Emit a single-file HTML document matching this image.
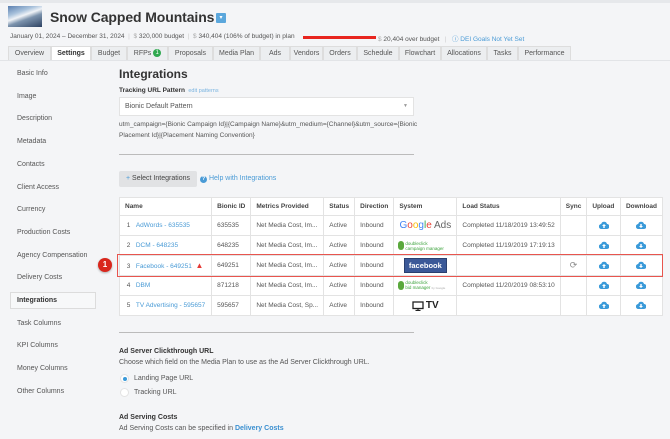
<!DOCTYPE html>
<html><head><meta charset="utf-8"><style>
*{margin:0;padding:0;box-sizing:border-box}
body{width:670px;height:439px;overflow:hidden;background:#f4f5f7;font-family:"Liberation Sans",sans-serif;color:#444;position:relative}
.a{position:absolute;white-space:nowrap}
.s{font-size:7px;color:#555}
.tab{position:absolute;top:46px;height:14px;font-size:7px;color:#555;text-align:center;line-height:14px;border:1px solid #ddd;border-bottom:none;background:#eceef0}
.side{position:absolute;left:17px;font-size:7px;color:#555}
table{border-collapse:collapse;background:#fff;font-size:6.5px;color:#555}
td,th{border:1px solid #e3e3e3;height:20px;padding:0 5px;text-align:left;white-space:nowrap}
th{height:18px;font-weight:bold;color:#444}
.lk{color:#4a9bd6}
.cl{text-align:center}
</style></head><body>
<div class="a" style="left:0;top:0;width:670px;height:3px;background:#e6e8eb"></div>
<div class="a" style="left:8px;top:6px;width:34px;height:21px;background:linear-gradient(160deg,#5a7fb0 0%,#a9c2dc 30%,#f0f3f7 45%,#7c93ad 60%,#2d4262 100%)"></div>
<div class="a" style="left:50px;top:9px;font-size:14px;font-weight:bold;color:#333;letter-spacing:-0.1px">Snow Capped Mountains</div>
<div class="a" style="left:216px;top:13px;width:10px;height:10px;background:#5ba7dc;border-radius:1px;color:#fff;font-size:6px;text-align:center;line-height:10px">▾</div>
<div class="a s" style="left:10px;top:33px;font-size:6.5px">January 01, 2024 – December 31, 2024 <span style="color:#ccc">&nbsp;|&nbsp;</span> <span style="color:#aaa">$</span> 320,000 budget <span style="color:#ccc">&nbsp;|&nbsp;</span> <span style="color:#aaa">$</span> 340,404 (106% of budget) in plan</div>
<div class="a" style="left:303px;top:36px;width:73px;height:3px;background:#e8251f"></div>
<div class="a s" style="left:378px;top:33px;font-size:6.5px"><span style="color:#aaa">$</span> 20,404 over budget <span style="color:#ccc">&nbsp;&nbsp;|&nbsp;&nbsp;</span> <span style="color:#4a9bd6">ⓘ DEI Goals Not Yet Set</span></div>
<div class="tab" style="left:8px;width:43px">Overview</div>
<div class="tab" style="left:51px;width:40px;background:#fff;font-weight:bold;color:#333;height:15px">Settings</div>
<div class="tab" style="left:91px;width:36px">Budget</div>
<div class="tab" style="left:127px;width:41px">RFPs <span style="display:inline-block;width:8px;height:8px;border-radius:4px;background:#2fa84f;color:#fff;font-size:6px;line-height:8px;vertical-align:middle">1</span></div>
<div class="tab" style="left:168px;width:45px">Proposals</div>
<div class="tab" style="left:213px;width:47px">Media Plan</div>
<div class="tab" style="left:260px;width:30px">Ads</div>
<div class="tab" style="left:290px;width:33px">Vendors</div>
<div class="tab" style="left:323px;width:34px">Orders</div>
<div class="tab" style="left:357px;width:42px">Schedule</div>
<div class="tab" style="left:399px;width:42px">Flowchart</div>
<div class="tab" style="left:441px;width:46px">Allocations</div>
<div class="tab" style="left:487px;width:31px">Tasks</div>
<div class="tab" style="left:518px;width:53px">Performance</div>
<div class="a" style="left:0;top:60px;width:670px;height:1px;background:#e2e4e7"></div>

<div class="side" style="top:70px">Basic Info</div>
<div class="side" style="top:93px">Image</div>
<div class="side" style="top:115px">Description</div>
<div class="side" style="top:138px">Metadata</div>
<div class="side" style="top:161px">Contacts</div>
<div class="side" style="top:184px">Client Access</div>
<div class="side" style="top:206px">Currency</div>
<div class="side" style="top:229px">Production Costs</div>
<div class="side" style="top:252px">Agency Compensation</div>
<div class="side" style="top:274px">Delivery Costs</div>
<div class="a" style="left:10px;top:292px;width:86px;height:17px;border:1px solid #dcdcdc;background:#f7f8f9"></div>
<div class="side" style="top:297px;font-weight:bold;color:#333">Integrations</div>
<div class="side" style="top:320px">Task Columns</div>
<div class="side" style="top:342px">KPI Columns</div>
<div class="side" style="top:365px">Money Columns</div>
<div class="side" style="top:388px">Other Columns</div>

<div class="a" style="left:119px;top:67px;font-size:12px;font-weight:bold;color:#333">Integrations</div>
<div class="a" style="left:119px;top:87px;font-size:6.5px;font-weight:bold;color:#333">Tracking URL Pattern <span style="font-weight:normal;color:#7ab4e0;font-size:5.5px">&nbsp;edit patterns</span></div>
<div class="a" style="left:119px;top:97px;width:295px;height:19px;background:#fff;border:1px solid #e3e3e3"></div>
<div class="a s" style="left:125px;top:103px">Bionic Default Pattern</div>
<div class="a" style="left:403px;top:103px;font-size:5px;color:#999">▼</div>
<div class="a s" style="left:119px;top:121px;font-size:6.5px">utm_campaign={Bionic Campaign Id}|{Campaign Name}&amp;utm_medium={Channel}&amp;utm_source={Bionic</div>
<div class="a s" style="left:119px;top:132px;font-size:6.5px">Placement Id}|{Placement Naming Convention}</div>
<div class="a" style="left:119px;top:154px;width:295px;height:1px;background:#bbb"></div>
<div class="a" style="left:119px;top:171px;width:78px;height:16px;background:#e1e2e4;border-radius:2px;font-size:7px;color:#444;line-height:16px;text-align:center"><span style="color:#4a9bd6">+</span> Select Integrations</div>
<div class="a" style="left:200px;top:175px;font-size:7px;color:#4a9bd6"><span style="display:inline-block;width:7px;height:7px;border-radius:4px;background:#4a9bd6;color:#fff;font-size:5.5px;text-align:center;line-height:7px;font-weight:bold">?</span> Help with Integrations</div>

<table class="a" style="left:119px;top:197px;width:544px">
<tr><th style="width:98px">Name</th><th style="width:39px">Bionic ID</th><th style="width:74px">Metrics Provided</th><th style="width:31px">Status</th><th style="width:38px">Direction</th><th style="width:65px">System</th><th style="width:98px">Load Status</th><th style="width:25px">Sync</th><th style="width:37px">Upload</th><th>Download</th></tr>
<tr><td>&nbsp;1 &nbsp;&nbsp;<span class="lk">AdWords - 635535</span></td><td>635535</td><td>Net Media Cost, Im...</td><td>Active</td><td>Inbound</td><td class="cl" style="font-size:10px"><span style="color:#4285f4">G</span><span style="color:#ea4335">o</span><span style="color:#fbbc05">o</span><span style="color:#4285f4">g</span><span style="color:#34a853">l</span><span style="color:#ea4335">e</span> <span style="color:#666">Ads</span></td><td>Completed 11/18/2019 13:49:52</td><td></td><td class="cl"><svg width="10" height="8" viewBox="0 0 10 8"><path d="M2.5 8a2.5 2.5 0 0 1-.3-5A3 3 0 0 1 8 3a2.5 2.5 0 0 1 0 5z" fill="#3a9ad9"/><path d="M5 3l-2 2h1.3v2h1.4V5H7z" fill="#fff"/></svg></td><td class="cl"><svg width="10" height="8" viewBox="0 0 10 8"><path d="M2.5 8a2.5 2.5 0 0 1-.3-5A3 3 0 0 1 8 3a2.5 2.5 0 0 1 0 5z" fill="#3a9ad9"/><path d="M5 7l-2-2h1.3V3h1.4v2H7z" fill="#fff"/></svg></td></tr>
<tr><td>&nbsp;2 &nbsp;&nbsp;<span class="lk">DCM - 648235</span></td><td>648235</td><td>Net Media Cost, Im...</td><td>Active</td><td>Inbound</td><td style="font-size:4.5px;color:#3ca23c;line-height:5px;padding-left:4px"><span style="display:inline-block;width:6px;height:9px;background:#5aa83c;border-radius:3px;vertical-align:middle;margin-right:1px"></span><span style="display:inline-block;vertical-align:middle">doubleclick<br>campaign manager</span></td><td>Completed 11/19/2019 17:19:13</td><td></td><td class="cl"><svg width="10" height="8" viewBox="0 0 10 8"><path d="M2.5 8a2.5 2.5 0 0 1-.3-5A3 3 0 0 1 8 3a2.5 2.5 0 0 1 0 5z" fill="#3a9ad9"/><path d="M5 3l-2 2h1.3v2h1.4V5H7z" fill="#fff"/></svg></td><td class="cl"><svg width="10" height="8" viewBox="0 0 10 8"><path d="M2.5 8a2.5 2.5 0 0 1-.3-5A3 3 0 0 1 8 3a2.5 2.5 0 0 1 0 5z" fill="#3a9ad9"/><path d="M5 7l-2-2h1.3V3h1.4v2H7z" fill="#fff"/></svg></td></tr>
<tr><td>&nbsp;3 &nbsp;&nbsp;<span class="lk">Facebook - 649251</span> &nbsp;<span style="color:#e53935;font-size:8px">▲</span></td><td>649251</td><td>Net Media Cost, Im...</td><td>Active</td><td>Inbound</td><td class="cl"><span style="display:inline-block;background:#3b5998;color:#fff;font-weight:bold;font-size:7.5px;padding:2px 4px;border:1px solid #2a4070">facebook</span></td><td></td><td class="cl" style="color:#888;font-size:9px">⟳</td><td class="cl"><svg width="10" height="8" viewBox="0 0 10 8"><path d="M2.5 8a2.5 2.5 0 0 1-.3-5A3 3 0 0 1 8 3a2.5 2.5 0 0 1 0 5z" fill="#3a9ad9"/><path d="M5 3l-2 2h1.3v2h1.4V5H7z" fill="#fff"/></svg></td><td class="cl"><svg width="10" height="8" viewBox="0 0 10 8"><path d="M2.5 8a2.5 2.5 0 0 1-.3-5A3 3 0 0 1 8 3a2.5 2.5 0 0 1 0 5z" fill="#3a9ad9"/><path d="M5 7l-2-2h1.3V3h1.4v2H7z" fill="#fff"/></svg></td></tr>
<tr><td>&nbsp;4 &nbsp;&nbsp;<span class="lk">DBM</span></td><td>871218</td><td>Net Media Cost, Im...</td><td>Active</td><td>Inbound</td><td style="font-size:4.5px;color:#3ca23c;line-height:5px;padding-left:4px"><span style="display:inline-block;width:6px;height:9px;background:#5aa83c;border-radius:3px;vertical-align:middle;margin-right:1px"></span><span style="display:inline-block;vertical-align:middle">doubleclick<br>bid manager <span style="color:#aaa;font-size:3px">by Google</span></span></td><td>Completed 11/20/2019 08:53:10</td><td></td><td class="cl"><svg width="10" height="8" viewBox="0 0 10 8"><path d="M2.5 8a2.5 2.5 0 0 1-.3-5A3 3 0 0 1 8 3a2.5 2.5 0 0 1 0 5z" fill="#3a9ad9"/><path d="M5 3l-2 2h1.3v2h1.4V5H7z" fill="#fff"/></svg></td><td class="cl"><svg width="10" height="8" viewBox="0 0 10 8"><path d="M2.5 8a2.5 2.5 0 0 1-.3-5A3 3 0 0 1 8 3a2.5 2.5 0 0 1 0 5z" fill="#3a9ad9"/><path d="M5 7l-2-2h1.3V3h1.4v2H7z" fill="#fff"/></svg></td></tr>
<tr><td>&nbsp;5 &nbsp;&nbsp;<span class="lk">TV Advertising - 595657</span></td><td>595657</td><td>Net Media Cost, Sp...</td><td>Active</td><td>Inbound</td><td class="cl"><svg width="12" height="10" viewBox="0 0 12 10" style="vertical-align:middle"><rect x="1" y="1" width="10" height="6.5" fill="none" stroke="#222" stroke-width="1.3"/><path d="M6 7.5v2M3.5 9.5h5" stroke="#222" stroke-width="1.2"/></svg> <b style="font-size:10px;color:#222;vertical-align:middle">TV</b></td><td></td><td></td><td class="cl"><svg width="10" height="8" viewBox="0 0 10 8"><path d="M2.5 8a2.5 2.5 0 0 1-.3-5A3 3 0 0 1 8 3a2.5 2.5 0 0 1 0 5z" fill="#3a9ad9"/><path d="M5 3l-2 2h1.3v2h1.4V5H7z" fill="#fff"/></svg></td><td class="cl"><svg width="10" height="8" viewBox="0 0 10 8"><path d="M2.5 8a2.5 2.5 0 0 1-.3-5A3 3 0 0 1 8 3a2.5 2.5 0 0 1 0 5z" fill="#3a9ad9"/><path d="M5 7l-2-2h1.3V3h1.4v2H7z" fill="#fff"/></svg></td></tr>
</table>
<div class="a" style="left:117px;top:254px;width:546px;height:23px;border:1.5px solid #e8554e"></div>
<div class="a" style="left:98px;top:258px;width:14px;height:14px;border-radius:7px;background:#d9261c;color:#fff;font-size:8px;font-weight:bold;text-align:center;line-height:14px;box-shadow:0 1px 2px rgba(0,0,0,.3)">1</div>

<div class="a" style="left:119px;top:332px;width:295px;height:1px;background:#bbb"></div>
<div class="a" style="left:119px;top:348px;font-size:7px;font-weight:bold;color:#333">Ad Server Clickthrough URL</div>
<div class="a s" style="left:119px;top:359px">Choose which field on the Media Plan to use as the Ad Server Clickthrough URL.</div>
<div class="a" style="left:120px;top:374px;width:9px;height:9px;border-radius:5px;background:#fff;border:1px solid #e3e3e3"></div>
<div class="a" style="left:123px;top:377px;width:4px;height:4px;border-radius:2px;background:#3a9ad9"></div>
<div class="a s" style="left:134px;top:375px">Landing Page URL</div>
<div class="a" style="left:120px;top:388px;width:9px;height:9px;border-radius:5px;background:#fff;border:1px solid #e3e3e3"></div>
<div class="a s" style="left:134px;top:389px">Tracking URL</div>
<div class="a" style="left:119px;top:414px;font-size:7px;font-weight:bold;color:#333">Ad Serving Costs</div>
<div class="a s" style="left:119px;top:425px">Ad Serving Costs can be specified in <span style="color:#3a8fd0;font-weight:bold">Delivery Costs</span></div>
</body></html>
